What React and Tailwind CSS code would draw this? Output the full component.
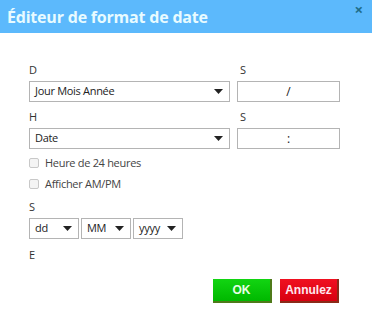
import React from "react";

function Caret() {
  return (
    <svg width="9" height="5" viewBox="0 0 9 5" className="shrink-0">
      <path d="M0 0h9L4.5 5z" fill="#222" />
    </svg>
  );
}

function Select({ value, className }) {
  return (
    <div
      className={`flex h-[21px] items-center justify-between border border-[#b4b4b4] bg-white pl-[5px] pr-[6px] text-[11px] tracking-[-0.3px] text-[#222] ${className}`}
    >
      <span>{value}</span>
      <Caret />
    </div>
  );
}

function Checkbox({ label }) {
  return (
    <label className="flex items-center gap-[6px] text-[11px] tracking-[-0.3px] text-[#444]">
      <span className="h-[10px] w-[10px] rounded-[2px] border border-[#c8c8c8] bg-[#f4f4f4]" />
      {label}
    </label>
  );
}

export default function App() {
  return (
    <div
      className="h-[315px] w-[372px] overflow-hidden bg-white"
      style={{ fontFamily: '"Open Sans", "Noto Sans", sans-serif' }}
    >
      {/* Title bar */}
      <div className="relative flex h-[33px] items-center bg-[#5cb9fc] pl-[7px]">
        <h1 className="text-[16px] font-bold tracking-[-0.2px] text-[#e8fbff]">
          Éditeur de format de date
        </h1>
        <span className="absolute right-[9px] top-[-2px] text-[15px] font-bold text-[#1e6d8a]">
          ×
        </span>
      </div>

      <div className="px-[29px] pt-[30px]">
        <div className="flex gap-[7px]">
          <div className="w-[201px]">
            <div className="mb-[4px] text-[11px] leading-[14px] text-[#333]">D</div>
            <Select value="Jour Mois Année" />
          </div>
          <div className="w-[103px]">
            <div className="mb-[4px] pl-[3px] text-[11px] leading-[14px] text-[#333]">S</div>
            <div className="flex h-[21px] items-center justify-center border border-[#b4b4b4] text-[12px] text-[#222]">
              /
            </div>
          </div>
        </div>

        <div className="mt-[8px] flex gap-[7px]">
          <div className="w-[201px]">
            <div className="mb-[4px] text-[11px] leading-[14px] text-[#333]">H</div>
            <Select value="Date" />
          </div>
          <div className="w-[103px]">
            <div className="mb-[4px] pl-[3px] text-[11px] leading-[14px] text-[#333]">S</div>
            <div className="flex h-[21px] items-center justify-center border border-[#b4b4b4] text-[12px] text-[#222]">
              :
            </div>
          </div>
        </div>

        <div className="mt-[5px] flex flex-col gap-[4px] leading-[17px]">
          <Checkbox label="Heure de 24 heures" />
          <Checkbox label="Afficher AM/PM" />
        </div>

        <div className="mt-[8px] text-[11px] leading-[14px] text-[#333]">S</div>
        <div className="mt-[4px] flex gap-[2px]">
          <Select value="dd" className="w-[50px]" />
          <Select value="MM" className="w-[50px]" />
          <Select value="yyyy" className="w-[50px]" />
        </div>

        <div className="mt-[9px] text-[11px] leading-[14px] text-[#333]">E</div>

        <div className="mt-[17px] flex justify-end gap-[8px] pr-[4px]">
          <button
            className="h-[24px] w-[59px] border-b-2 border-r-2 border-[#4f7a1a] bg-gradient-to-b from-[#12d512] to-[#00b800] text-[12px] font-bold text-[#e8ffe8]"
            style={{ fontFamily: '"Liberation Sans", sans-serif' }}
          >
            OK
          </button>
          <button
            className="h-[24px] w-[59px] border-b-2 border-r-2 border-[#8a2a18] bg-gradient-to-b from-[#f01020] to-[#d80010] text-[12px] font-bold text-[#ffe6ee]"
            style={{ fontFamily: '"Liberation Sans", sans-serif' }}
          >
            Annulez
          </button>
        </div>
      </div>
    </div>
  );
}
